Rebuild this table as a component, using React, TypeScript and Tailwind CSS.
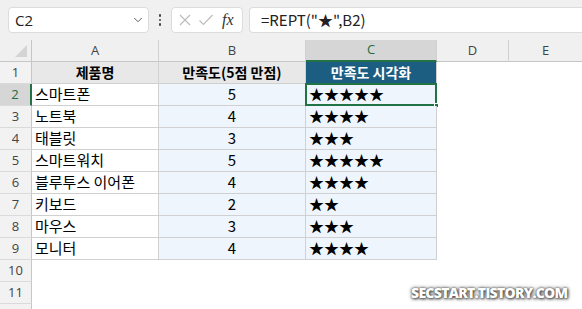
import { ChevronDown } from "lucide-react";

const rows = [
  { name: "스마트폰", score: 5 },
  { name: "노트북", score: 4 },
  { name: "태블릿", score: 3 },
  { name: "스마트워치", score: 5 },
  { name: "블루투스 이어폰", score: 4 },
  { name: "키보드", score: 2 },
  { name: "마우스", score: 3 },
  { name: "모니터", score: 4 },
];

const ui = "font-['Open_Sans','Noto_Sans_CJK_KR',sans-serif]";
const kr = "font-['Noto_Sans_CJK_KR','Noto_Sans',sans-serif]";

function RowHead({ n, active }: { n?: number; active?: boolean }) {
  return (
    <div
      className={`w-[32px] h-[22px] shrink-0 flex items-center justify-center text-[13px] border-b border-[#dadada] ${ui} ${
        active
          ? "bg-[#d6d6d6] text-[#1e6b3f] border-r-2 border-r-[#217346]"
          : "bg-[#f2f2f2] text-[#444] border-r border-r-[#c6c6c6]"
      }`}
    >
      {n}
    </div>
  );
}

export default function App() {
  return (
    <div className="w-[582px] h-[309px] bg-white overflow-hidden relative">
      {/* formula bar */}
      <div className="h-[40px] bg-[#f0f0f0] flex items-start pt-[7px] pl-[8px]">
        <div className={`w-[141px] h-[26px] bg-white rounded-[4px] border border-[#dcdcdc] flex items-center justify-between pl-[6px] pr-[3px] text-[15px] text-[#222] ${ui}`}>
          <span>C2</span>
          <ChevronDown size={14} strokeWidth={1.6} className="text-[#555]" />
        </div>
        <div className="w-[22px] h-[26px] flex flex-col items-center justify-center gap-[2px]">
          <span className="w-[2.5px] h-[2.5px] bg-[#444] rounded-full" />
          <span className="w-[2.5px] h-[2.5px] bg-[#444] rounded-full" />
          <span className="w-[2.5px] h-[2.5px] bg-[#444] rounded-full" />
        </div>
        <div className="w-[72px] h-[26px] bg-white rounded-[4px] border border-[#dcdcdc] flex items-center pl-[6px] gap-[6px]">
          <svg width="14" height="14" viewBox="0 0 14 14" className="text-[#bdbdbd]">
            <path d="M2 2 L12 12 M12 2 L2 12" stroke="currentColor" strokeWidth="1.2" fill="none" />
          </svg>
          <svg width="16" height="14" viewBox="0 0 16 14" className="text-[#bdbdbd]">
            <path d="M1.5 7.5 L5.5 11.5 L14.5 2" stroke="currentColor" strokeWidth="1.2" fill="none" />
          </svg>
          <span className="font-['Liberation_Serif',serif] italic text-[16px] text-[#333] leading-none ml-[2px]">fx</span>
        </div>
        <div className={`flex-1 ml-[6px] h-[26px] bg-white rounded-l-[4px] border border-r-0 border-[#dcdcdc] flex items-center pl-[11px] text-[15px] text-[#222] ${kr}`}>
          =REPT("★",B2)
        </div>
      </div>

      {/* column headers */}
      <div className={`flex h-[22px] bg-[#f0f0f0] text-[13px] text-[#444] ${ui}`}>
        <div className="w-[32px] shrink-0 border-r border-b border-[#c6c6c6] relative">
          <div className="absolute right-[4px] bottom-[4px] w-0 h-0 border-l-[12px] border-l-transparent border-b-[12px] border-b-[#d4d4d4]" />
        </div>
        <div className="w-[127px] flex items-center justify-center border-r border-b border-[#d0d0d0] border-b-[#c6c6c6]">A</div>
        <div className="w-[147px] flex items-center justify-center border-r border-b border-[#d0d0d0] border-b-[#c6c6c6]">B</div>
        <div className="w-[131px] flex items-center justify-center bg-[#d6d6d6] text-[#1e6b3f] border-r border-[#d0d0d0] border-b-2 border-b-[#217346]">C</div>
        <div className="w-[72px] flex items-center justify-center border-r border-b border-[#d0d0d0] border-b-[#c6c6c6]">D</div>
        <div className="flex-1 flex items-center justify-center border-b border-[#c6c6c6]">E</div>
      </div>

      {/* header row */}
      <div className="flex">
        <RowHead n={1} />
        <div className={`w-[127px] h-[22px] bg-[#e8e8e8] border-r border-b border-[#d0d0d0] flex items-center justify-center text-[14px] font-bold text-black ${kr}`}>
          제품명
        </div>
        <div className={`w-[147px] h-[22px] bg-[#e8e8e8] border-r border-b border-[#d0d0d0] flex items-center justify-center text-[14px] font-bold text-black ${kr}`}>
          만족도(5점 만점)
        </div>
        <div className={`w-[131px] h-[22px] bg-[#1b5e82] border-r border-b border-[#d0d0d0] flex items-center justify-center text-[14px] font-bold text-white ${kr}`}>
          만족도 시각화
        </div>
      </div>

      {rows.map((r, i) => (
        <div key={r.name} className="flex">
          <RowHead n={i + 2} active={i === 0} />
          <div className={`w-[127px] h-[22px] bg-white border-r border-b border-[#d0d0d0] flex items-center pl-[3px] text-[15px] text-black ${kr}`}>
            {r.name}
          </div>
          <div className={`w-[147px] h-[22px] bg-[#eef5fc] border-r border-b border-[#d0d0d0] flex items-center justify-center text-[15px] text-black ${kr}`}>
            {r.score}
          </div>
          <div className={`w-[131px] h-[22px] bg-[#eef5fc] border-r border-b border-[#d0d0d0] flex items-center pl-[3px] text-[15px] text-black relative ${kr}`}>
            {"★".repeat(r.score)}
            {i === 0 && (
              <>
                <div className="absolute -left-[1px] -top-[1px] -right-[1px] -bottom-[1px] border-2 border-[#217346]" />
                <div className="absolute -right-[3px] -bottom-[3px] w-[5px] h-[5px] bg-[#217346] border border-white" />
              </>
            )}
          </div>
        </div>
      ))}

      <RowHead n={10} />
      <RowHead n={11} />
      <RowHead />

      {/* watermark */}
      <div className="absolute left-[411px] top-[282px] font-['Open_Sans',sans-serif] font-extrabold text-[14px] text-white tracking-[-0.7px] [text-shadow:0_0_2px_#555,1px_1px_3px_#444,0_0_4px_#777]">
        SECSTART.TISTORY.COM
      </div>
    </div>
  );
}
